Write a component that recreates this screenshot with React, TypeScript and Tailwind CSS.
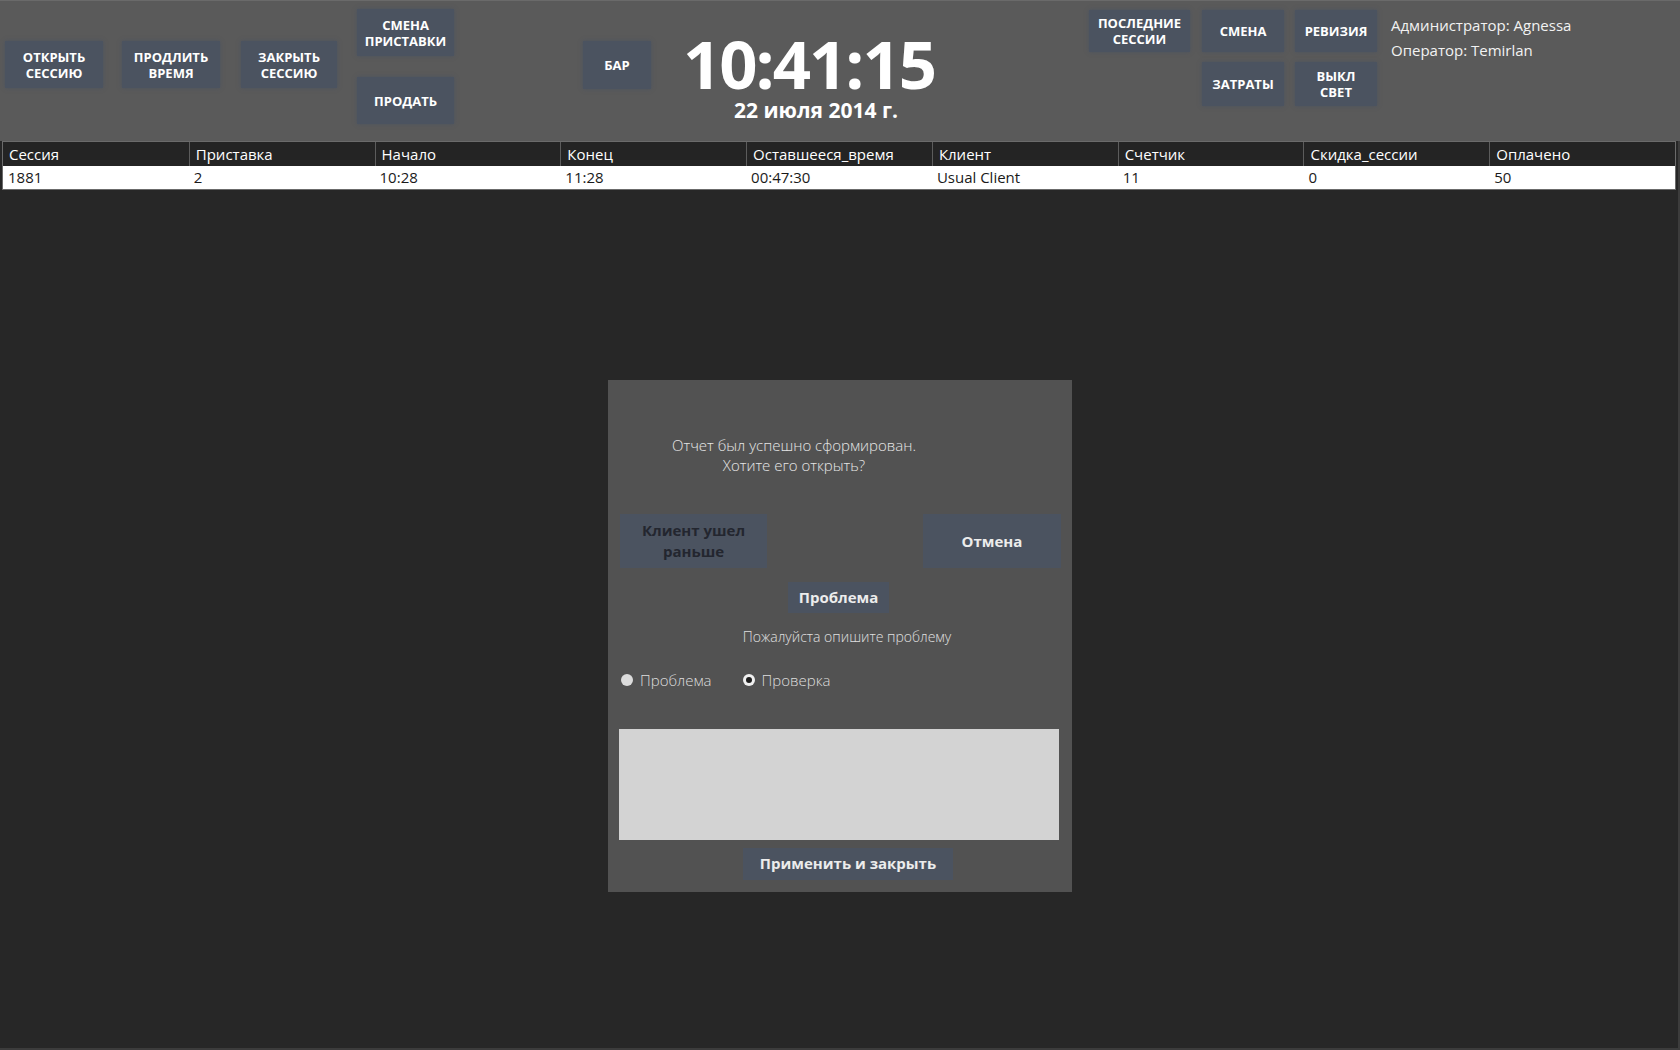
import React from 'react'

const FONT = "font-['Open_Sans','Noto_Sans',sans-serif]"

function HBtn({ lines, className = '' }: { lines: string[]; className?: string }) {
  return (
    <div
      className={`flex flex-col items-center justify-center bg-[#4b5360] text-white text-[13px] font-bold leading-[16px] text-center shadow-[0_0_4px_#4b5360] ${className}`}
    >
      {lines.map((l) => (
        <span key={l}>{l}</span>
      ))}
    </div>
  )
}

const columns = ['Сессия', 'Приставка', 'Начало', 'Конец', 'Оставшееся_время', 'Клиент', 'Счетчик', 'Скидка_сессии', 'Оплачено']
const row = ['1881', '2', '10:28', '11:28', '00:47:30', 'Usual Client', '11', '0', '50']

function Header() {
  return (
    <div className="h-[141px] shrink-0 bg-[#5a5a5a] border-t border-[#6a6a6a] flex items-start">
      <HBtn lines={['ОТКРЫТЬ', 'СЕССИЮ']} className="ml-[5px] mt-[40px] w-[98px] h-[47px]" />
      <HBtn lines={['ПРОДЛИТЬ', 'ВРЕМЯ']} className="ml-[19px] mt-[40px] w-[98px] h-[47px]" />
      <HBtn lines={['ЗАКРЫТЬ', 'СЕССИЮ']} className="ml-[21px] mt-[40px] w-[96px] h-[47px]" />
      <div className="ml-[20px] mt-[8px] flex flex-col gap-[21px]">
        <HBtn lines={['СМЕНА', 'ПРИСТАВКИ']} className="w-[97px] h-[47px]" />
        <HBtn lines={['ПРОДАТЬ']} className="w-[97px] h-[47px]" />
      </div>
      <HBtn lines={['БАР']} className="ml-[129px] mt-[40px] w-[68px] h-[48px]" />
      <div className="ml-[20px] mt-[29px] w-[276px] flex flex-col items-center text-white">
        <div className="text-[67px] font-bold leading-[66px] tracking-[-2px]">10:41:15</div>
        <div className="mt-[2px] ml-[14px] text-[21px] font-bold leading-[24px]">22 июля 2014 г.</div>
      </div>
      <HBtn lines={['ПОСЛЕДНИЕ', 'СЕССИИ']} className="ml-[142px] mt-[9px] w-[101px] h-[42px]" />
      <div className="ml-[12px] mt-[9px] grid grid-cols-[82px_82px] gap-x-[11px] gap-y-[10px]">
        <HBtn lines={['СМЕНА']} className="h-[42px]" />
        <HBtn lines={['РЕВИЗИЯ']} className="h-[42px]" />
        <HBtn lines={['ЗАТРАТЫ']} className="h-[44px]" />
        <HBtn lines={['ВЫКЛ', 'СВЕТ']} className="h-[44px]" />
      </div>
      <div className="ml-[14px] mt-[12px] text-[15px] leading-[25px] text-[#f2f2f2]">
        <div>Администратор: Agnessa</div>
        <div>Оператор: Temirlan</div>
      </div>
    </div>
  )
}

function Table() {
  return (
    <div className="ml-[2px] mr-[2px] border border-[#6b6b6b]">
      <div className="grid grid-cols-9 bg-[#242424] text-white text-[15px] leading-[24px]">
        {columns.map((c, i) => (
          <div key={c} className={`px-[6px] ${i > 0 ? 'border-l border-[#5c5c5c]' : ''}`}>
            {c}
          </div>
        ))}
      </div>
      <div className="grid grid-cols-9 bg-white text-[#1a1a1a] text-[15px] leading-[23px]">
        {row.map((c, i) => (
          <div key={i} className="px-[5px]">
            {c}
          </div>
        ))}
      </div>
    </div>
  )
}

function Radio({ checked, label }: { checked: boolean; label: string }) {
  return (
    <div className="flex items-center">
      {checked ? (
        <span className="w-[12px] h-[12px] rounded-full bg-[#f0f0f0] flex items-center justify-center">
          <span className="w-[6px] h-[6px] rounded-full bg-[#1e1e1e]" />
        </span>
      ) : (
        <span className="w-[12px] h-[12px] rounded-full bg-[#dcdcdc]" />
      )}
      <span className="ml-[7px] text-[15px] font-light text-[#dedede]">{label}</span>
    </div>
  )
}

function Dialog() {
  return (
    <div className="absolute left-[608px] top-[380px] w-[464px] h-[512px] bg-[#525252] flex flex-col">
      <div className="mt-[55px] w-[372px] text-center text-[15px] font-light leading-[20px] text-[#e6e6e6]">
        <div>Отчет был успешно сформирован.</div>
        <div>Хотите его открыть?</div>
      </div>
      <div className="mt-[39px] flex justify-between pl-[12px] pr-[11px]">
        <div className="w-[147px] h-[54px] bg-[#4b5360] flex flex-col items-center justify-center text-[15px] font-bold leading-[21px] text-[#23262f]">
          <span>Клиент ушел</span>
          <span>раньше</span>
        </div>
        <div className="w-[138px] h-[54px] bg-[#4b5360] flex items-center justify-center text-[15px] font-bold text-[#ececec]">
          Отмена
        </div>
      </div>
      <div className="mt-[14px] self-center ml-[-3px] w-[101px] h-[31px] bg-[#4b5360] flex items-center justify-center text-[15px] font-bold text-[#ececec]">
        Проблема
      </div>
      <div className="mt-[14px] pl-[14px] text-center text-[14px] font-light leading-[20px] text-[#e0e0e0]">
        Пожалуйста опишите проблему
      </div>
      <div className="mt-[22px] flex pl-[13px] gap-[31px]">
        <Radio checked={false} label="Проблема" />
        <Radio checked label="Проверка" />
      </div>
      <div className="mt-[37px] ml-[11px] mr-[13px] h-[111px] bg-[#d3d3d3]" />
      <div className="mt-[8px] self-center ml-[16px] w-[210px] h-[32px] bg-[#4b5360] flex items-center justify-center text-[15px] font-bold text-[#ececec]">
        Применить и закрыть
      </div>
    </div>
  )
}

export default function App() {
  return (
    <div className={`relative w-[1680px] h-[1050px] overflow-hidden bg-[#272727] flex flex-col ${FONT}`}>
      <Header />
      <div className="flex-1 border-r-[2px] border-b-[2px] border-[#3c3c3c]">
        <Table />
      </div>
      <Dialog />
    </div>
  )
}
